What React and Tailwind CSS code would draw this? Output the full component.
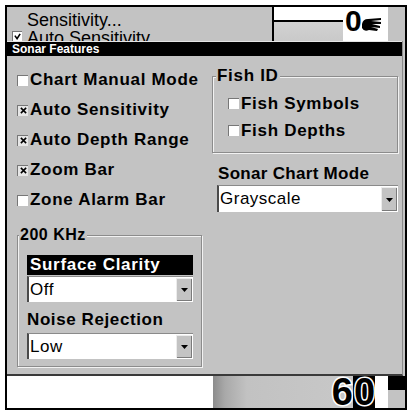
import React from "react";

const sans = "font-['Liberation_Sans',Arial,sans-serif]";
const narrow = "font-['Liberation_Sans_Narrow','Liberation_Sans',Arial,sans-serif]";

function Box({ checked }) {
  return (
    <span
      className={`w-[11px] h-[11px] shrink-0 border-t border-l border-[#777] flex items-center justify-center ${
        checked ? "bg-[#e6e6e6]" : "bg-white"
      }`}
    >
      {checked && (
        <svg viewBox="0 0 8 8" className="w-[7px] h-[7px]">
          <path d="M1 1 L7 7 M7 1 L1 7" stroke="black" strokeWidth="1.8" />
        </svg>
      )}
    </span>
  );
}

function Check({ label, checked, h = "h-[30px]" }) {
  return (
    <div className={`${h} flex items-center gap-[2px]`}>
      <Box checked={checked} />
      <span className="text-[17px] leading-[18px] font-bold tracking-[0.7px]">{label}</span>
    </div>
  );
}

function Select({ value, className }) {
  return (
    <div className={`flex bg-white border-t border-t-[#8a8a8a] border-l-2 border-l-[#4a4a4a] ${className}`}>
      <span className="flex-1 pl-[1px] text-[17px] tracking-[0.5px] flex items-center">{value}</span>
      <span className="w-[16px] my-[1px] mr-[1px] bg-[#c3c3c3] border-l border-t border-[#ececec] shadow-[inset_-1px_-1px_0_#7a7a7a] flex items-center justify-center">
        <svg viewBox="0 0 7 4" className="w-[7px] h-[4px]">
          <path d="M0 0 L7 0 L3.5 4 Z" fill="black" />
        </svg>
      </span>
    </div>
  );
}

const groupBox =
  "border border-[#8c8c8c] shadow-[inset_1px_1px_0_#f2f2f2,1px_1px_0_#f2f2f2]";

export default function App() {
  return (
    <div className={`w-[409px] h-[410px] bg-white pl-[5px] pt-[5px] text-black ${sans}`}>
      <div className="w-[402px] h-[405px] border-2 border-black bg-[#c3c3c3] flex flex-col overflow-hidden">
        {/* Background menu, mostly hidden behind the dialog */}
        <div className="h-[34px] shrink-0 flex overflow-hidden">
          <div className="w-[265px] pt-[4px]">
            <div className="h-[17px] leading-[18px] text-[18px] pl-[20px]">Sensitivity...</div>
            <div className="h-[17px] flex items-start pl-[5px] gap-[5px]">
              <span className="mt-[3px] w-[10px] h-[10px] shrink-0 bg-white border-t border-l border-[#777] flex items-center justify-center">
                <svg viewBox="0 0 8 8" className="w-[7px] h-[7px]">
                  <path d="M1 3 L3.5 6.5 L7 1" stroke="black" strokeWidth="1.8" fill="none" />
                </svg>
              </span>
              <span className="text-[18px] leading-[18px] mt-[1px]">Auto Sensitivity</span>
            </div>
          </div>
          <div className="w-[116px] border-l-2 border-black bg-white flex">
            <div className="w-[69px] flex flex-col">
              <div className="h-[13px]" />
              <div className="h-[2px] bg-black" />
              <div className="flex-1 bg-[linear-gradient(to_bottom,#d2d2d2,#c9c9c9)]" />
            </div>
            <span className={`${narrow} font-bold text-[30px] leading-[29px] -mt-[1px] ml-[2px]`}>0</span>
            <svg viewBox="0 0 20 16" className="w-[20px] h-[16px] mt-[10px]">
              <path
                d="M0 7 Q1 2 6 2 L19 1 L19 3 L9 4 L19 5 L19 7 L10 7 L18 9 L18 11 L9 10 L16 12 L15 14 L7 13 Q2 15 0 11 Z"
                fill="black"
              />
            </svg>
          </div>
          <div className="flex-1" />
        </div>

        {/* Sonar Features dialog */}
        <div className="h-[335px] shrink-0 flex flex-col mr-[2px] border-b-2 border-[#3a3a3a] border-r border-r-[#8a8a8a]">
          <div className="h-[15px] border-t border-[#e4e4e4] bg-black text-white flex items-center pl-[5px]">
            <span className={`${narrow} font-bold text-[12px] leading-[14px]`}>Sonar Features</span>
          </div>
          <div className="flex-1 flex">
            {/* Left column */}
            <div className="w-[203px] pl-[10px] pt-[9px]">
              <Check label="Chart Manual Mode" />
              <Check label="Auto Sensitivity" checked />
              <Check label="Auto Depth Range" checked />
              <Check label="Zoom Bar" checked />
              <Check label="Zone Alarm Bar" />
              <fieldset className={`mt-[11px] w-[185px] pl-[1px] ${groupBox}`}>
                <legend className="px-[1px] bg-[#c3c3c3] text-[16px] leading-[18px] font-bold tracking-[0.5px]">
                  200 KHz
                </legend>
                <div className="pt-[11px] pl-[8px] pr-[8px] pb-[7px]">
                  <div className="h-[20px] bg-black text-white pl-[3px] flex items-center text-[17px] font-bold tracking-[0.7px]">
                    Surface Clarity
                  </div>
                  <Select value="Off" className="mt-[1px] h-[26px]" />
                  <div className="mt-[9px] h-[18px] leading-[18px] text-[17px] font-bold tracking-[0.6px]">
                    Noise Rejection
                  </div>
                  <Select value="Low" className="mt-[4px] h-[26px]" />
                </div>
              </fieldset>
            </div>

            {/* Right column */}
            <div className="flex-1 pt-[11px]">
              <fieldset className={`ml-[2px] w-[186px] pl-[3px] ${groupBox}`}>
                <legend className="px-[1px] bg-[#c3c3c3] text-[17px] leading-[18px] font-bold tracking-[0.7px]">
                  Fish ID
                </legend>
                <div className="pl-[12px] pt-[5px] pb-[8px]">
                  <Check label="Fish Symbols" h="h-[27px]" />
                  <Check label="Fish Depths" h="h-[27px]" />
                </div>
              </fieldset>
              <div className="mt-[12px] ml-[8px] h-[18px] leading-[18px] text-[17px] font-bold tracking-[0.3px]">
                Sonar Chart Mode
              </div>
              <Select value="Grayscale" className="mt-[2px] ml-[7px] w-[181px] h-[27px]" />
            </div>
          </div>
        </div>

        {/* Bottom chart strip */}
        <div className="flex-1 flex">
          <div className="w-[206px] bg-white" />
          <div className="w-[140px] bg-[linear-gradient(to_right,#8c8c8c,#a9a9a9_12px,#c2c2c2_34px,#c8c8c8)] flex justify-end">
            <span
              className={`${narrow} font-bold text-[38px] leading-[32px] text-black [-webkit-text-stroke:3px_white] [paint-order:stroke_fill]`}
            >
              6
            </span>
          </div>
          <div className="w-[22px] bg-black">
            <span
              className={`${narrow} font-bold text-[38px] leading-[32px] text-black [-webkit-text-stroke:3px_white] [paint-order:stroke_fill] ml-[1px]`}
            >
              0
            </span>
          </div>
          <div className="w-[13px] bg-white" />
          <div className="flex-1 flex flex-col">
            <div className="h-[14px] bg-black" />
            <div className="flex-1 bg-[#c3c3c3]" />
          </div>
        </div>
      </div>
    </div>
  );
}
